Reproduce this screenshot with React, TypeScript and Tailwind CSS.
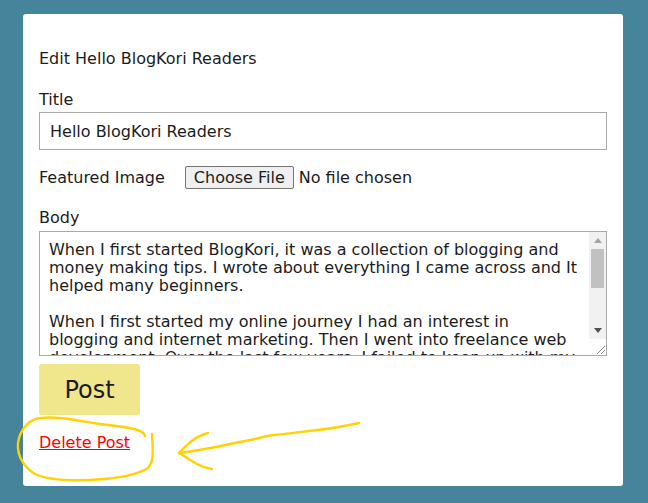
import React from 'react';

const bodyText = `When I first started BlogKori, it was a collection of blogging and
money making tips. I wrote about everything I came across and It
helped many beginners.

When I first started my online journey I had an interest in
blogging and internet marketing. Then I went into freelance web
development. Over the last few years, I failed to keep up with my
blog and it slowly lost its readers. Now I want to bring it back
to life and share what I have learned along the way.`;

function Scribbles() {
  // hand-drawn yellow annotation over the delete link
  return (
    <svg
      className="pointer-events-none absolute left-0 top-0 h-[503px] w-[648px]"
      viewBox="0 0 648 503"
      fill="none"
      stroke="#ffd200"
      strokeWidth="2.4"
      strokeLinecap="round"
      strokeLinejoin="round"
    >
      <path d="M145 436 C144 430, 135 428, 100 424 C75 420, 55 416, 40 418 C30 419, 22 428, 19 438 C15 452, 22 466, 35 474 C50 481, 80 481, 105 479 C125 477, 140 473, 148 468 C154 462, 153 450, 152 434" />
      <path d="M359 423 C345 426, 330 429, 317 430 C300 432, 285 434, 273 435 C262 437, 255 439, 250 440 C235 443, 225 445, 216 447 C200 450, 188 452, 179 453" />
      <path d="M208 433 C200 435, 192 440, 186 446 C183 449, 180 452, 179 453" />
      <path d="M179 453 C185 456, 188 459, 192 461 C198 465, 205 468, 212 469" />
    </svg>
  );
}

function ScrollBar() {
  return (
    <div className="flex w-[17px] flex-col bg-[#f1f1f1]">
      <div className="flex h-[17px] items-center justify-center">
        <svg width="8" height="5" viewBox="0 0 8 5">
          <path d="M4 0 L8 5 L0 5 Z" fill="#a3a3a3" />
        </svg>
      </div>
      <div className="flex-1 px-[2px]">
        <div className="h-[39px] bg-[#c1c1c1]" />
      </div>
      <div className="flex h-[17px] items-center justify-center">
        <svg width="8" height="5" viewBox="0 0 8 5">
          <path d="M0 0 L8 0 L4 5 Z" fill="#505050" />
        </svg>
      </div>
      <div className="flex h-[16px] items-end justify-end bg-white">
        <svg width="12" height="12" viewBox="0 0 12 12" stroke="#8a8a8a" strokeWidth="1">
          <path d="M11 3 L3 11 M11 7 L7 11" />
        </svg>
      </div>
    </div>
  );
}

export default function App() {
  return (
    <div className="relative min-h-screen bg-[#45849a] pl-[23px] pt-[14px] font-['DejaVu_Sans',sans-serif] text-base text-[#1c1c1c]">
      <div className="w-[600px] rounded-[3px] bg-white px-4 pb-[33px] pt-[35px]">
        <h1 className="leading-5">Edit Hello BlogKori Readers</h1>

        <form className="mt-[21px] flex flex-col items-start" onSubmit={(e) => e.preventDefault()}>
          {/* Title */}
          <label className="leading-5">Title</label>
          <input
            type="text"
            defaultValue="Hello BlogKori Readers"
            className="mt-[2px] h-[38px] w-full border border-[#aaa] px-[10px] leading-5 outline-none"
          />

          {/* Featured image */}
          <div className="mt-4 flex h-[23px] items-center">
            <label className="mr-5 leading-5">Featured Image</label>
            <input
              type="file"
              accept="image/*"
              className="leading-5 file:mr-[5px] file:h-[23px] file:rounded-[2px] file:border file:border-[#767676] file:bg-[#efefef] file:px-2 file:text-[#1c1c1c]"
            />
          </div>

          {/* Body */}
          <label className="mt-[19px] leading-5">Body</label>
          <div className="mt-[3px] flex h-[125px] w-full border border-[#aaa]">
            <textarea
              defaultValue={bodyText}
              className="min-w-0 flex-1 resize-none overflow-hidden pl-[9px] pr-0 pt-[9px] text-base leading-[18px] outline-none"
            />
            <ScrollBar />
          </div>

          <button
            type="submit"
            className="mt-2 h-[51px] w-[101px] rounded-[3px] bg-[#f0e68c] text-2xl text-[#1c1c1c]"
          >
            Post
          </button>

          <a href="#" className="mt-[18px] leading-5 text-[#ff0000] underline">
            Delete Post
          </a>
        </form>
      </div>
      <Scribbles />
    </div>
  );
}
